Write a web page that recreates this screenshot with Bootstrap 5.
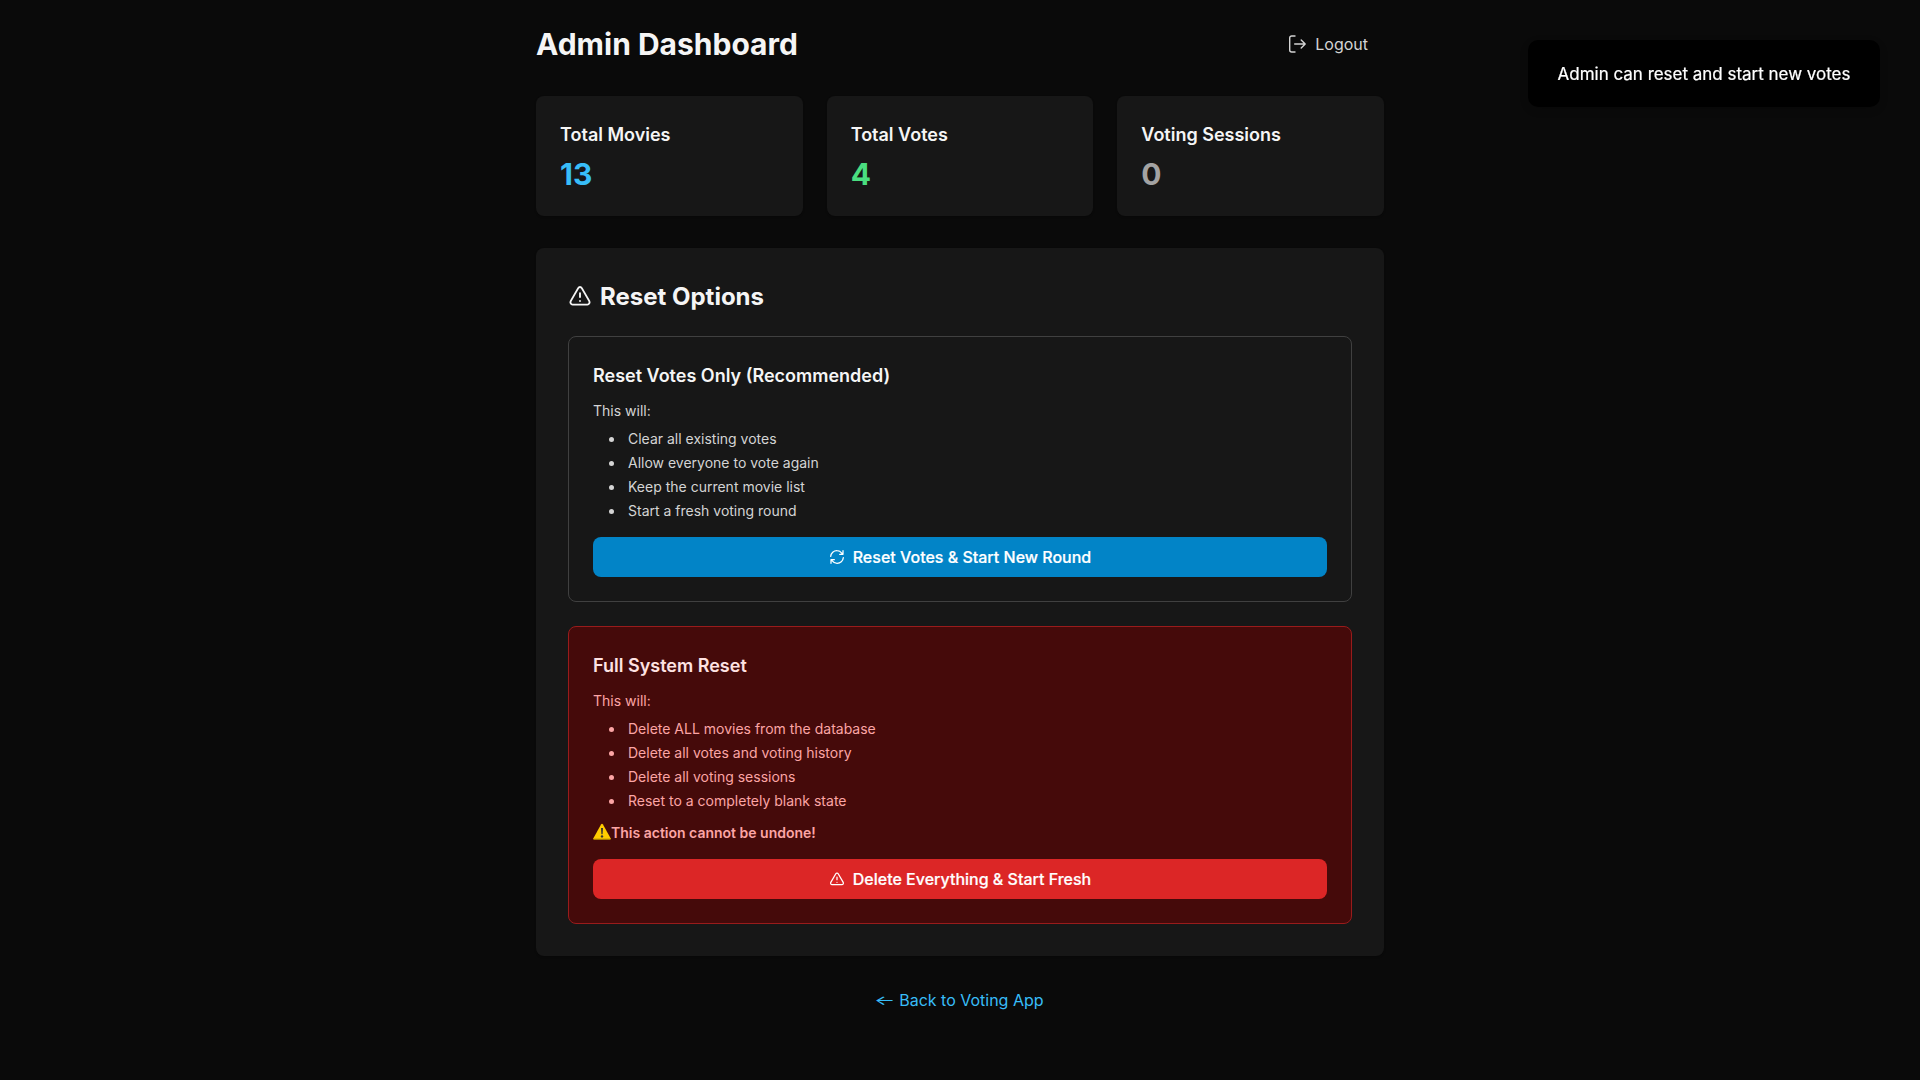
<!DOCTYPE html>
<html lang="en">
<head>
<meta charset="utf-8">
<meta name="viewport" content="width=device-width, initial-scale=1">
<title>Admin Dashboard</title>
<link href="https://cdn.jsdelivr.net/npm/bootstrap@5.3.0/dist/css/bootstrap.min.css" rel="stylesheet">
<style>
body{background:#0a0a0a;color:#f5f5f5;font-family:Inter,"Liberation Sans",sans-serif;font-size:16px;line-height:24px;min-height:100vh}
.page{width:848px}
.page h1{font-size:30px;line-height:36px}
.page h2{font-size:24px;line-height:34px;margin-bottom:22px}
.page h2 svg{margin-bottom:2px}
.page h3{font-size:18px;line-height:30px;margin-bottom:6px}
.logout{height:40px;color:#d4d4d4;padding:0 16px}
.surface{background:#171717;border-radius:8px;box-shadow:0 1px 2px rgba(0,0,0,.25)}
.stats{display:grid;grid-template-columns:repeat(3,1fr);gap:24px;margin:32px 0}
.figure-num{font-size:30px;line-height:36px}
.num-blue{color:#38bdf8}
.num-green{color:#4ade80}
.num-gray{color:#a3a3a3}
.panel-pad{padding:32px}
.option{border:1px solid #404040;border-radius:8px;color:#d4d4d4;font-size:14px;line-height:20px}
.option h3{color:#f5f5f5;margin-bottom:10px}
.option ul{list-style:disc inside;margin:8px 0 0 16px;padding:0}
.option li span{margin-left:-1px}
.option li+li{margin-top:4px}
.option.danger-zone{background:#450a0a;border-color:#991b1b;color:#fca5a5}
.danger-zone h3{color:#fee2e2}
.warn{margin-top:12px;height:20px}
.warn svg{margin-bottom:2px}
.action{height:40px;border:0;border-radius:8px;font-size:16px;font-weight:500;color:#fff;background:#0284c7;-webkit-text-stroke:.2px #fff}
.action.red{background:#dc2626}
.back{color:#38bdf8}
.back span{display:inline-block;transform:scale(1.4,.8);transform-origin:50% 58%;margin:0 2px 0 1px}
.notice{top:40px;right:40px;width:352px;height:67px;font-size:17px;letter-spacing:-.02px;padding-top:1px;-webkit-text-stroke:.2px #fff;background:#000;color:#fff;border-radius:10px;box-shadow:0 3px 10px rgba(0,0,0,.1),0 3px 3px rgba(0,0,0,.05)}
svg{flex:none}
</style>
</head>
<body>
<svg class="d-none"><defs>
<symbol id="alert" viewBox="0 0 24 24"><path d="M10.2 4.100 2.700 17.100c-.8 1.500.2 3.500 1.900 3.500h14.800c1.700 0 2.700-2 1.900-3.500L13.800 4.100c-.8-1.400-2.800-1.400-3.600 0zM12 9.200v3.900M12 17v.05" fill="none" stroke="currentColor" stroke-width="1.900" stroke-linecap="round" stroke-linejoin="round"/></symbol>
</defs></svg>
<main class="page mx-auto pt-4">
  <header class="d-flex justify-content-between align-items-center">
    <h1 class="fw-bold m-0">Admin Dashboard</h1>
    <button class="logout btn border-0 d-flex align-items-center gap-2">
      <svg width="20" height="20" viewBox="0 0 20 20" fill="none" stroke="currentColor" stroke-width="1.400" stroke-linecap="round" stroke-linejoin="round"><path d="M8 2H4.700a2 2 0 0 0-2 2v12a2 2 0 0 0 2 2H8M7.700 10h10.300M14.200 6l4 4-4 4"/></svg>
      <span>Logout</span>
    </button>
  </header>
  <section class="stats">
    <div class="surface p-4"><h3 class="fw-semibold">Total Movies</h3><div class="figure-num fw-bold num-blue">13</div></div>
    <div class="surface p-4"><h3 class="fw-semibold">Total Votes</h3><div class="figure-num fw-bold num-green">4</div></div>
    <div class="surface p-4"><h3 class="fw-semibold">Voting Sessions</h3><div class="figure-num fw-bold num-gray">0</div></div>
  </section>
  <section class="surface panel-pad">
    <h2 class="fw-bold d-flex align-items-center gap-2"><svg width="24" height="24"><use href="#alert"/></svg>Reset Options</h2>
    <div class="option p-4 mb-4">
      <h3 class="fw-semibold">Reset Votes Only (Recommended)</h3>
      <p class="m-0">This will:</p>
      <ul><li><span>Clear all existing votes</span></li><li><span>Allow everyone to vote again</span></li><li><span>Keep the current movie list</span></li><li><span>Start a fresh voting round</span></li></ul>
      <button class="action btn w-100 mt-3 p-0 d-flex align-items-center justify-content-center gap-2">
        <svg width="16" height="16" viewBox="0 0 24 24" fill="none" stroke="currentColor" stroke-width="1.900" stroke-linecap="round" stroke-linejoin="round"><path d="M2.500 11A9.300 9.300 0 0 1 12 2.500c3 0 5.600 1.500 7.500 4L21 8M21 2.500V8h-5M21.500 13A9.300 9.300 0 0 1 12 21.500c-3 0-5.600-1.500-7.500-4L3 16M8 16H3v5.500"/></svg>Reset Votes &amp; Start New Round</button>
    </div>
    <div class="option danger-zone p-4">
      <h3 class="fw-semibold">Full System Reset</h3>
      <p class="m-0">This will:</p>
      <ul><li><span>Delete ALL movies from the database</span></li><li><span>Delete all votes and voting history</span></li><li><span>Delete all voting sessions</span></li><li><span>Reset to a completely blank state</span></li></ul>
      <p class="warn mb-0 fw-semibold d-flex align-items-center"><svg width="18" height="18" viewBox="0 0 18 18"><path d="M8 1.500q1-1.500 2 0l7.600 13.700q.4 1.200-.8 1.300H1.200Q0 16.400.4 15.200z" fill="#fc0"/><path d="M.6 16.200h16.800" stroke="#a98300"/><path d="M8 5h2l-.4 6.200H8.400z" fill="#333"/><circle cx="9" cy="13.400" r="1.200" fill="#333"/></svg>This action cannot be undone!</p>
      <button class="action red btn w-100 mt-3 p-0 d-flex align-items-center justify-content-center gap-2"><svg width="16" height="16"><use href="#alert"/></svg>Delete Everything &amp; Start Fresh</button>
    </div>
  </section>
  <div class="text-center mt-4 pt-2"><a href="#" class="back text-decoration-none"><span>←</span> Back to Voting App</a></div>
</main>
<div class="notice position-fixed d-flex align-items-center justify-content-center" role="status">Admin can reset and start new votes</div>
<script src="https://cdn.jsdelivr.net/npm/bootstrap@5.3.0/dist/js/bootstrap.bundle.min.js"></script>
</body>
</html>
